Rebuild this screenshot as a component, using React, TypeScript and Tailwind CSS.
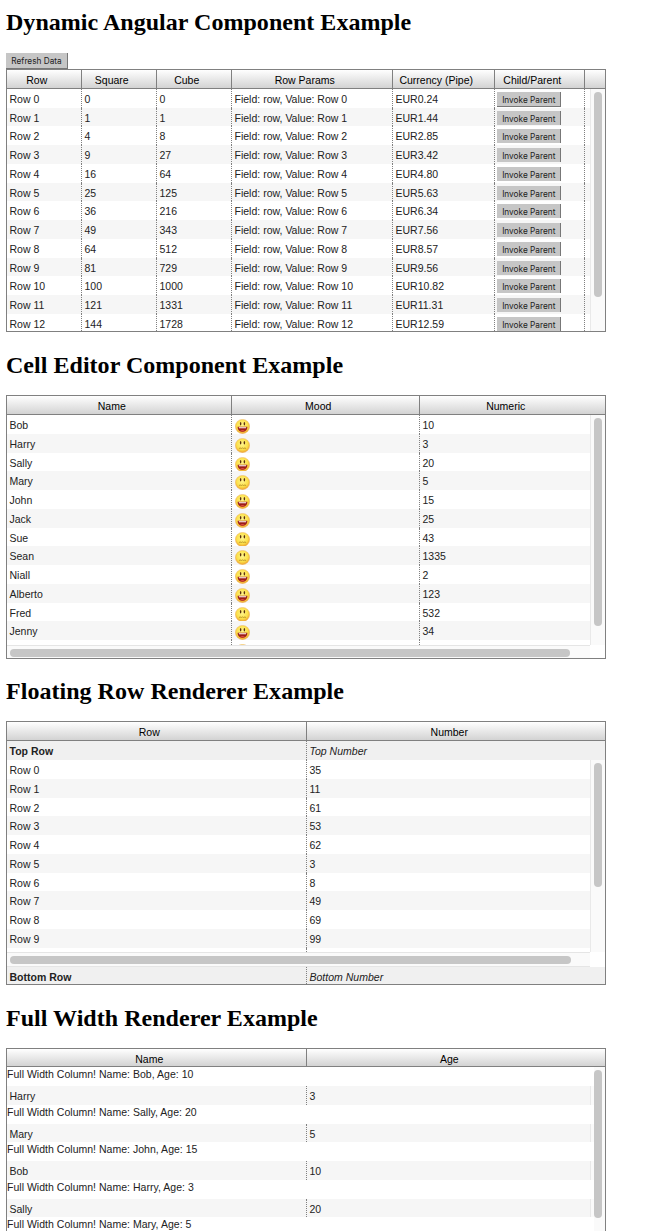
import type { ReactNode } from "react";

type Column = { label: string; width: string };

const range = (n: number) => Array.from({ length: n }, (_, i) => i);
const stripe = (i: number) => (i % 2 ? "bg-[#f6f6f6]" : "bg-white");

function Heading({ children, className }: { children: ReactNode; className: string }) {
  return (
    <h1 className={`font-['Liberation_Serif',serif] text-[24px] leading-[27px] font-bold tracking-[0.03px] whitespace-nowrap text-black ${className}`}>
      {children}
    </h1>
  );
}

function Header({ columns, height }: { columns: Column[]; height: string }) {
  return (
    <div className={`flex shrink-0 overflow-hidden border-b border-[#808080] bg-linear-to-b from-white to-[#d3d3d3] text-black ${height}`}>
      {columns.map((c) => (
        <div
          key={c.label}
          className={`flex shrink-0 items-center justify-center border-r border-[#808080] pt-[2.5px] pr-[14.5px] leading-[14px] whitespace-nowrap ${c.width}`}
        >
          {c.label}
        </div>
      ))}
    </div>
  );
}

function Cell({ children, width, last = false }: { children?: ReactNode; width: string; last?: boolean }) {
  return (
    <div
      className={`h-full shrink-0 overflow-hidden pt-[3px] pl-[2.5px] leading-[14px] whitespace-nowrap ${
        last ? "" : "border-r border-dotted border-[#808080]"
      } ${width}`}
    >
      {children}
    </div>
  );
}

function Row({ children, index }: { children: ReactNode; index: number }) {
  return <div className={`flex h-[18.75px] shrink-0 ${stripe(index)}`}>{children}</div>;
}

function VerticalScrollbar({ thumb }: { thumb: string }) {
  return (
    <div className="w-[15px] shrink-0 border-l border-[#e9e9e9] bg-[#fafafa] pt-[3px] pl-[3px]">
      <div className={`w-2 rounded-full bg-[#c6c6c6] ${thumb}`} />
    </div>
  );
}

function HorizontalScrollbar({ thumb, height }: { thumb: string; height: string }) {
  return (
    <div className={`w-[583px] shrink-0 border-t border-[#e5e5e5] bg-[#fafafa] pt-[3px] pl-[3px] ${height}`}>
      <div className={`h-2 rounded-full bg-[#c6c6c6] ${thumb}`} />
    </div>
  );
}

function Grid({ children, height }: { children: ReactNode; height: string }) {
  return (
    <div
      className={`flex w-[600px] flex-col overflow-hidden border border-[#808080] font-['Liberation_Sans',sans-serif] text-[10.5px] tracking-[0.01px] text-[#222] ${height}`}
    >
      {children}
    </div>
  );
}

function Smiley({ happy }: { happy: boolean }) {
  return (
    <svg viewBox="0 0 16 16" className="mt-px size-[15px]">
      <defs>
        <radialGradient id="face" cx="48%" cy="40%" r="60%">
          <stop offset="0" stopColor="#fff48c" />
          <stop offset="0.65" stopColor="#fbe04a" />
          <stop offset="1" stopColor="#efa22e" />
        </radialGradient>
      </defs>
      <circle cx="8" cy="8" r="7.6" fill="url(#face)" stroke="#eeb05a" strokeWidth="0.5" />
      <ellipse cx="6" cy="5" rx="0.8" ry="1.8" fill="#5b3010" />
      <ellipse cx="10" cy="5" rx="0.8" ry="1.8" fill="#5b3010" />
      {happy ? (
        <>
          <path d="M2.8 8.300h10.400c0 3.400-2.200 5.500-5.200 5.500s-5.200-2.100-5.200-5.500z" fill="#9c1c18" />
          <path d="M4 8.700h8l-.3 1.100H4.300z" fill="#fff" />
          <path d="M5.500 12.500c1.400-1.200 3.600-1.200 5 0-1.500 1-3.500 1-5 0z" fill="#dd4f40" />
        </>
      ) : (
        <path d="M4.200 11.300l1.200-.7 1.300.6 1.300-.6 1.300.6 1.300-.6 1.200.7" fill="none" stroke="#a8801c" strokeWidth="0.8" />
      )}
    </svg>
  );
}

const dynamicColumns: Column[] = [
  { label: "Row", width: "w-[75px]" },
  { label: "Square", width: "w-[75px]" },
  { label: "Cube", width: "w-[75px]" },
  { label: "Row Params", width: "w-[161px]" },
  { label: "Currency (Pipe)", width: "w-[102px]" },
  { label: "Child/Parent", width: "w-[90px]" },
];

const currency = ["0.24", "1.44", "2.85", "3.42", "4.80", "5.63", "6.34", "7.56", "8.57", "9.56", "10.82", "11.31", "12.59"];

const moods: [string, boolean, number][] = [
  ["Bob", true, 10],
  ["Harry", false, 3],
  ["Sally", true, 20],
  ["Mary", false, 5],
  ["John", true, 15],
  ["Jack", true, 25],
  ["Sue", false, 43],
  ["Sean", false, 1335],
  ["Niall", true, 2],
  ["Alberto", true, 123],
  ["Fred", false, 532],
  ["Jenny", true, 34],
];

const numbers = [35, 11, 61, 53, 62, 3, 8, 49, 69, 99];

const people: [string, number][] = [
  ["Bob", 10],
  ["Harry", 3],
  ["Sally", 20],
  ["Mary", 5],
  ["John", 15],
  ["Bob", 10],
  ["Harry", 3],
  ["Sally", 20],
  ["Mary", 5],
];

const buttonStyle =
  "block border-r border-[#777] bg-[#c6c6c6] font-[Inter,sans-serif] text-[8.25px] text-[#222] whitespace-nowrap text-center";

export default function App() {
  return (
    <main className="h-[1231px] w-[655px] overflow-hidden bg-white pl-[6px]">
      <Heading className="pt-[9px]">Dynamic Angular Component Example</Heading>
      <button className={`${buttonStyle} mt-[17px] h-4 w-[62px] border-b pt-px leading-[14px]`}>Refresh Data</button>
      <Grid height="h-[263px]">
        <Header columns={dynamicColumns} height="h-[18.9px]" />
        <div className="flex min-h-0 flex-1">
          <div className="w-[583px] overflow-hidden">
            {range(13).map((i) => (
              <Row key={i} index={i}>
                <Cell width="w-[75px]">Row {i}</Cell>
                <Cell width="w-[75px]">{i * i}</Cell>
                <Cell width="w-[75px]">{i * i * i}</Cell>
                <Cell width="w-[161px]">Field: row, Value: Row {i}</Cell>
                <Cell width="w-[102px]">EUR{currency[i]}</Cell>
                <Cell width="w-[90px]">
                  <button
                    className={`${buttonStyle} -ml-[0.25px] w-16 pt-px leading-[14px] ${i === 0 ? "h-[15px] border-b" : "h-[14px]"}`}
                  >
                    Invoke Parent
                  </button>
                </Cell>
              </Row>
            ))}
          </div>
          <VerticalScrollbar thumb="h-[205px]" />
        </div>
      </Grid>

      <Heading className="pt-5">Cell Editor Component Example</Heading>
      <div className="h-4" />
      <Grid height="h-[264px]">
        <Header
          columns={[
            { label: "Name", width: "w-[225px]" },
            { label: "Mood", width: "w-[188px]" },
            { label: "Numeric", width: "w-[187px]" },
          ]}
          height="h-[19px]"
        />
        <div className="flex h-[230px] shrink-0">
          <div className="w-[583px] overflow-hidden">
            {moods.map(([name, happy, value], i) => (
              <Row key={name} index={i}>
                <Cell width="w-[225px]">{name}</Cell>
                <Cell width="w-[188px]">
                  <Smiley happy={happy} />
                </Cell>
                <Cell width="w-[170px]" last>
                  {value}
                </Cell>
              </Row>
            ))}
            <Row index={0}>
              <Cell width="w-[225px]" />
              <Cell width="w-[188px]">
                <Smiley happy={false} />
              </Cell>
            </Row>
          </div>
          <VerticalScrollbar thumb="h-[208px]" />
        </div>
        <HorizontalScrollbar height="h-[13px]" thumb="w-[560px]" />
      </Grid>

      <Heading className="pt-[19px]">Floating Row Renderer Example</Heading>
      <div className="h-4" />
      <Grid height="h-[264px]">
        <Header
          columns={[
            { label: "Row", width: "w-[300px]" },
            { label: "Number", width: "w-[300px]" },
          ]}
          height="h-[19px]"
        />
        <div className="flex h-[19px] shrink-0 bg-[#f0f0f0]">
          <Cell width="w-[300px] font-bold">Top Row</Cell>
          <Cell width="w-[298px] italic" last>
            Top Number
          </Cell>
        </div>
        <div className="flex h-[192px] shrink-0">
          <div className="w-[583px] overflow-hidden">
            {numbers.map((n, i) => (
              <Row key={i} index={i}>
                <Cell width="w-[300px]">Row {i}</Cell>
                <Cell width="w-[283px]" last>
                  {n}
                </Cell>
              </Row>
            ))}
            <Row index={0}>
              <Cell width="w-[300px]" />
            </Row>
          </div>
          <VerticalScrollbar thumb="h-[124px]" />
        </div>
        <HorizontalScrollbar height="h-[15px] border-b" thumb="w-[561px]" />
        <div className="flex h-[19px] shrink-0 bg-[#f0f0f0]">
          <Cell width="w-[300px] font-bold">Bottom Row</Cell>
          <Cell width="w-[298px] italic" last>
            Bottom Number
          </Cell>
        </div>
      </Grid>

      <Heading className="pt-5">Full Width Renderer Example</Heading>
      <div className="h-4" />
      <Grid height="h-[264px]">
        <Header
          columns={[
            { label: "Name", width: "w-[300px]" },
            { label: "Age", width: "w-[300px]" },
          ]}
          height="h-[18.25px]"
        />
        <div className="flex min-h-0 flex-1">
          <div className="w-[587px] overflow-hidden">
            {people.map(([name, age], i) =>
              i % 2 === 0 ? (
                <div key={i} className="h-[18.75px] bg-white leading-[14px] tracking-[0.02px]">
                  Full Width Column! Name: {name}, Age: {age}
                </div>
              ) : (
                <Row key={i} index={i}>
                  <Cell width="w-[300px]">{name}</Cell>
                  <Cell width="w-[283px]" last>
                    {age}
                  </Cell>
                  <div className="w-1 border-l border-[#e9e9e9] bg-[#fafafa]" />
                </Row>
              ),
            )}
          </div>
          <div className="w-[11px] bg-[#fafafa] pt-[3px]">
            <div className="h-[148px] w-2 rounded-full bg-[#c6c6c6]" />
          </div>
        </div>
      </Grid>
    </main>
  );
}
